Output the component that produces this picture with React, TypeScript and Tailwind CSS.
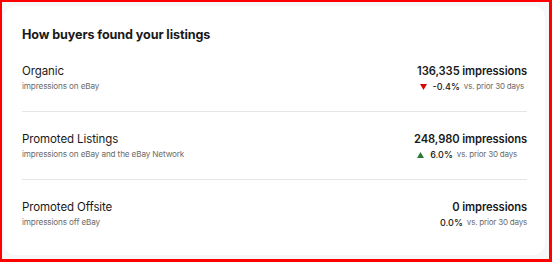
import React from "react";

type Row = {
  label: string;
  sub: string;
  value: string;
  pct: string;
  dir: "down" | "up" | "none";
  pr: string;
};

const rows: Row[] = [
  { label: "Organic", sub: "impressions on eBay", value: "136,335 impressions", pct: "-0.4%", dir: "down", pr: "pr-[3px]" },
  { label: "Promoted Listings", sub: "impressions on eBay and the eBay Network", value: "248,980 impressions", pct: "6.0%", dir: "up", pr: "pr-[10px]" },
  { label: "Promoted Offsite", sub: "impressions off eBay", value: "0 impressions", pct: "0.0%", dir: "none", pr: "pr-0" },
];

function Tri({ dir }: { dir: "down" | "up" }) {
  return (
    <svg width="7" height="6" viewBox="0 0 7 6" className="mr-[6px]">
      {dir === "down" ? (
        <path d="M0 0 L7 0 L3.5 6 Z" fill="#d50b0b" />
      ) : (
        <path d="M0 6 L7 6 L3.5 0 Z" fill="#2b7a3b" />
      )}
    </svg>
  );
}

export default function App() {
  return (
    <div
      className="w-[552px] h-[262px] bg-[#f7f7f7] border-solid border-[#ff0000] border-t-[2px] border-l-[2px] border-r-[3px] border-b-[3px] pt-[4px] pl-[2px] pr-[4px] pb-[4px] overflow-hidden"
      style={{ fontFamily: "Inter, 'Open Sans', sans-serif" }}
    >
      <div className="bg-white rounded-[12px] h-full pl-[18px] pr-[18px] pt-[19px] text-[#191919]">
        <div className="text-[12.6px] font-bold leading-[19px] tracking-[-0.1px]">How buyers found your listings</div>
        {rows.map((r, i) => (
          <div
            key={r.label}
            className={`flex justify-between items-start py-[18px] ${i < rows.length - 1 ? "border-b border-[#e5e5e5]" : ""}`}
          >
            <div>
              <div className="text-[11.5px] leading-[18px] text-[#191919] tracking-[-0.1px]">{r.label}</div>
              <div className="text-[8.2px] leading-[13px] text-[#6b6b6b] tracking-[-0.15px]">{r.sub}</div>
            </div>
            <div className="flex flex-col items-end">
              <div className="text-[11.2px] font-semibold leading-[18px] text-[#191919] tracking-[-0.1px]">{r.value}</div>
              <div className={`flex items-center leading-[13px] ${r.pr}`}>
                {r.dir !== "none" && <Tri dir={r.dir} />}
                <span className="text-[9px] font-medium text-[#191919] mr-[4px]">{r.pct}</span>
                <span className="text-[8px] text-[#6b6b6b] tracking-[-0.2px]">vs. prior 30 days</span>
              </div>
            </div>
          </div>
        ))}
      </div>
    </div>
  );
}
